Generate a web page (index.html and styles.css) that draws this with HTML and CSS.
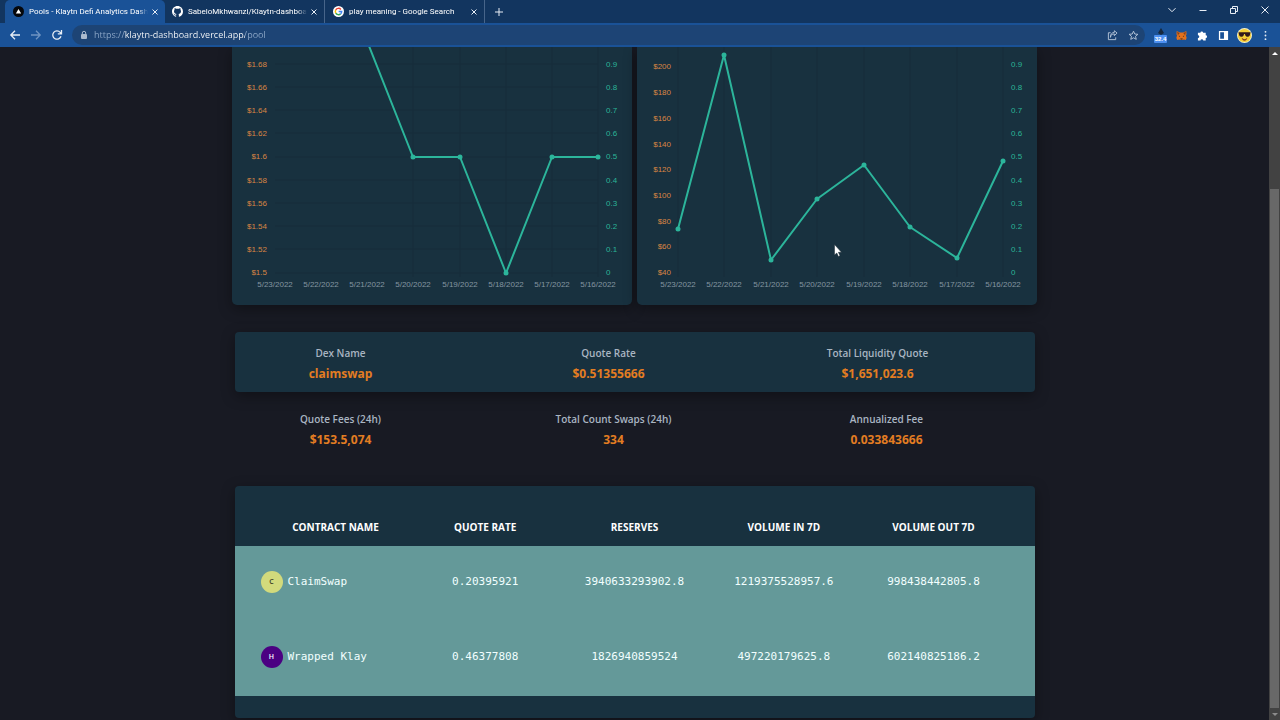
FILE: index.html
```
<!DOCTYPE html>
<html lang="en">
<head>
<meta charset="UTF-8">
<meta name="viewport" content="width=device-width, initial-scale=1.0">
<title>Pools - Klaytn Defi Analytics Dashboard</title>
<link rel="stylesheet" href="styles.css">
</head>
<body>

  <!-- tabs -->
  <header class="tabstrip">
    <div class="tab active">
      <svg class="favicon" viewBox="0 0 12 12"><circle cx="6" cy="6" r="6" fill="#05070b"/><path d="M6 3.2L8.900 8.200H3.100z" fill="#fff"/></svg>
      <span class="tab-title">Pools - Klaytn Defi Analytics Dash</span>
      <button class="tab-close" aria-label="Close tab"><svg viewBox="0 0 8 8"><path d="M1.500 1.500l5 5M6.500 1.500l-5 5"/></svg></button>
    </div>
    <div class="tab">
      <svg class="favicon" viewBox="0 0 16 16"><path fill="#fff" d="M8 0C3.580 0 0 3.580 0 8c0 3.540 2.290 6.530 5.470 7.590.4.070.550-.170.550-.380 0-.190-.010-.820-.010-1.490-2.010.370-2.530-.490-2.690-.940-.090-.230-.480-.940-.820-1.130-.280-.150-.680-.520-.010-.530.630-.010 1.080.580 1.230.820.720 1.210 1.870.870 2.330.660.070-.520.280-.870.510-1.070-1.780-.200-3.640-.890-3.640-3.950 0-.870.310-1.590.820-2.150-.080-.200-.360-1.020.080-2.120 0 0 .670-.210 2.200.820a7.400 7.400 0 0 1 4 0c1.530-1.040 2.200-.820 2.200-.820.440 1.100.160 1.920.080 2.120.510.560.820 1.270.820 2.150 0 3.070-1.870 3.750-3.650 3.950.290.250.540.730.540 1.480 0 1.070-.010 1.930-.010 2.200 0 .210.150.460.550.380A8 8 0 0 0 16 8c0-4.420-3.580-8-8-8z"/></svg>
      <span class="tab-title">SabeloMkhwanzi/Klaytn-dashboa</span>
      <button class="tab-close" aria-label="Close tab"><svg viewBox="0 0 8 8"><path d="M1.500 1.500l5 5M6.500 1.500l-5 5"/></svg></button>
    </div>
    <div class="tab">
      <svg class="favicon" viewBox="0 0 12 12"><circle cx="6" cy="6" r="6" fill="#fff"/><g fill="none" stroke-width="1.600"><path d="M8.600 3.700A3.500 3.500 0 0 0 3 4.300" stroke="#ea4335"/><path d="M3 4.300a3.500 3.500 0 0 0 0 3.400" stroke="#fbbc05"/><path d="M3 7.700a3.500 3.500 0 0 0 5.300.9" stroke="#34a853"/><path d="M8.300 8.600A3.400 3.400 0 0 0 9.500 6.100H6.200" stroke="#4285f4"/></g></svg>
      <span class="tab-title">play meaning - Google Search</span>
      <button class="tab-close" aria-label="Close tab"><svg viewBox="0 0 8 8"><path d="M1.500 1.500l5 5M6.500 1.500l-5 5"/></svg></button>
    </div>
    <button class="new-tab" aria-label="New tab"><svg viewBox="0 0 10 10"><path d="M5 1v8M1 5h8"/></svg></button>
    <div class="window-buttons">
      <button aria-label="Search tabs"><svg viewBox="0 0 10 10"><path d="M1.500 3.200L5 6.700l3.500-3.500"/></svg></button>
      <button aria-label="Minimize"><svg viewBox="0 0 10 10"><path d="M1.500 5.500h7"/></svg></button>
      <button aria-label="Restore"><svg viewBox="0 0 10 10"><path d="M1.500 3.500h5v5h-5zM3.500 3.500v-2h5v5h-2"/></svg></button>
      <button aria-label="Close"><svg viewBox="0 0 10 10"><path d="M1.500 1.500l7 7M8.500 1.500l-7 7"/></svg></button>
    </div>
  </header>

  <!-- toolbar -->
  <nav class="toolbar">
    <button class="nav-btn" aria-label="Back"><svg viewBox="0 0 12 12"><path d="M11 6H2M6 1.800L1.800 6 6 10.200"/></svg></button>
    <button class="nav-btn dim" aria-label="Forward"><svg viewBox="0 0 12 12"><path d="M1 6h9M6 1.800L10.200 6 6 10.200"/></svg></button>
    <button class="nav-btn" aria-label="Reload"><svg viewBox="0 0 12 12"><path d="M10 7.200A4.200 4.200 0 1 1 9.200 3.300L10.200 4.500M10.500 1v3.800H6.800"/></svg></button>
    <div class="omnibox">
      <svg class="lock" viewBox="0 0 8 10"><rect x="1" y="4" width="6" height="5" rx="1" fill="#a9b9cd"/><path d="M2.300 4.300V3a1.700 1.700 0 0 1 3.400 0v1.300" fill="none" stroke="#a9b9cd"/></svg>
      <input class="url" type="text" aria-label="Address" value="https://klaytn-dashboard.vercel.app/pool">
      <button aria-label="Share"><svg viewBox="0 0 12 12"><path d="M4 3H1.500v7.500h8V8M3.800 8C4 5.300 5.500 4.300 8 4.300V6.200l3-2.900-3-2.500v1.800C5 2.800 3.600 5 3.800 8z"/></svg></button>
      <button aria-label="Bookmark"><svg viewBox="0 0 12 12"><path d="M6 1.300l1.400 3.100 3.400.3-2.600 2.200.8 3.300-3-1.700-3 1.700.8-3.300L1.200 4.700l3.400-.3z"/></svg></button>
    </div>
    <div class="extensions">
      <button class="counter" aria-label="Gas tracker"><svg viewBox="0 0 8 7"><path d="M4 0l3 5-3 2-3-2z" fill="#16283e"/></svg><span>32.4</span></button>
      <button aria-label="MetaMask"><svg viewBox="0 0 12 12"><path d="M.8 1l3.400 1.700h3.600L11.200 1l.3 3.500-.7 1.600.8 2.400-.8 2.500-2.300-.6L7.300 11H4.700l-1.200-.6-2.300.6-.8-2.500.8-2.400-.7-1.600z" fill="#e2711d"/><path d="M1.200 1.500l2.800 2-2 2.300zM10.800 1.500L8 3.500l2 2.300z" fill="#87411a"/><path d="M3 6l1.700.8-1.400.5zM9 6l-1.700.8 1.400.5zM4.700 9.200h2.600l-.3 1.200H5z" fill="#2d2524"/></svg></button>
      <button aria-label="Extensions"><svg viewBox="0 0 12 12"><path d="M1 3h2.700a1.500 1.500 0 1 1 3 0H9.500v2.800a1.500 1.500 0 1 1 0 3V11.500H6.800a1.500 1.500 0 0 0-3 0H1V8.800a1.500 1.500 0 0 0 0-3z" fill="#fff"/></svg></button>
      <button aria-label="Side panel"><svg viewBox="0 0 12 12"><path d="M1.700 1.700h8.600v8.600H1.700z" fill="none" stroke="#fff" stroke-width="1.400"/><path d="M6.500 1.500h4v9h-4z" fill="#fff"/></svg></button>
      <button class="profile" aria-label="Profile"><svg viewBox="0 0 16 16"><circle cx="8" cy="8" r="8" fill="#f4eecb"/><circle cx="8" cy="8" r="7" fill="#f5cf36"/><path d="M1.500 4.500h13L13.600 8q-1 1.600-3.200 1.200Q8.800 8.700 8.400 6.500h-.8Q7.200 8.700 5.600 9.200 3.400 9.600 2.400 8z" fill="#32181a"/><path d="M5 10.500q3 3 6 0-.5 3-3 3t-3-3z" fill="#8c3b24"/></svg></button>
      <button aria-label="Menu"><svg viewBox="0 0 12 12"><g fill="#e8eef6"><circle cx="6" cy="2" r="1"/><circle cx="6" cy="6" r="1"/><circle cx="6" cy="10" r="1"/></g></svg></button>
    </div>
  </nav>

  <div class="viewport">
    <main class="page">
      <section class="charts">
        <div class="chart-card">
          <svg viewBox="0 0 400 258" role="img" aria-label="Liquidity chart">
            <path class="grid-lines" d="M43 17h323M43 40h323M43 63h323M43 86h323M43 110h323M43 133h323M43 156h323M43 179h323M43 202h323M43 226h323M181 0v230M228 0v230M274 0v230M320 0v230M366 0v230"/>
            <g class="axis-left">
              <text x="35" y="20">$1.68</text>
              <text x="35" y="43">$1.66</text>
              <text x="35" y="66">$1.64</text>
              <text x="35" y="89">$1.62</text>
              <text x="35" y="112">$1.6</text>
              <text x="35" y="136">$1.58</text>
              <text x="35" y="159">$1.56</text>
              <text x="35" y="182">$1.54</text>
              <text x="35" y="205">$1.52</text>
              <text x="35" y="228">$1.5</text>
            </g>
            <g class="axis-right">
              <text x="374" y="20">0.9</text>
              <text x="374" y="43">0.8</text>
              <text x="374" y="66">0.7</text>
              <text x="374" y="89">0.6</text>
              <text x="374" y="112">0.5</text>
              <text x="374" y="136">0.4</text>
              <text x="374" y="159">0.3</text>
              <text x="374" y="182">0.2</text>
              <text x="374" y="205">0.1</text>
              <text x="374" y="228">0</text>
            </g>
            <g class="axis-bottom">
              <text x="43" y="240">5/23/2022</text>
              <text x="89" y="240">5/22/2022</text>
              <text x="135" y="240">5/21/2022</text>
              <text x="181" y="240">5/20/2022</text>
              <text x="228" y="240">5/19/2022</text>
              <text x="274" y="240">5/18/2022</text>
              <text x="320" y="240">5/17/2022</text>
              <text x="366" y="240">5/16/2022</text>
            </g>
            <polyline class="line" points="135,-6 181,110 228,110 274,226 320,110 366,110"/>
            <g class="dots"><circle cx="181" cy="110" r="2.500"/><circle cx="228" cy="110" r="2.500"/><circle cx="274" cy="226" r="2.500"/><circle cx="320" cy="110" r="2.500"/><circle cx="366" cy="110" r="2.500"/></g>
          </svg>
        </div>
        <div class="chart-card">
          <svg viewBox="0 0 400 258" role="img" aria-label="Volume chart">
            <path class="grid-lines" d="M41 0v230M87 0v230M134 0v230M180 0v230M227 0v230M273 0v230M320 0v230M366 0v230"/>
            <g class="axis-left">
              <text x="34" y="22">$200</text>
              <text x="34" y="48">$180</text>
              <text x="34" y="74">$160</text>
              <text x="34" y="100">$140</text>
              <text x="34" y="125">$120</text>
              <text x="34" y="151">$100</text>
              <text x="34" y="177">$80</text>
              <text x="34" y="202">$60</text>
              <text x="34" y="228">$40</text>
            </g>
            <g class="axis-right">
              <text x="374" y="20">0.9</text>
              <text x="374" y="43">0.8</text>
              <text x="374" y="66">0.7</text>
              <text x="374" y="89">0.6</text>
              <text x="374" y="112">0.5</text>
              <text x="374" y="136">0.4</text>
              <text x="374" y="159">0.3</text>
              <text x="374" y="182">0.2</text>
              <text x="374" y="205">0.1</text>
              <text x="374" y="228">0</text>
            </g>
            <g class="axis-bottom">
              <text x="41" y="240">5/23/2022</text>
              <text x="87" y="240">5/22/2022</text>
              <text x="134" y="240">5/21/2022</text>
              <text x="180" y="240">5/20/2022</text>
              <text x="227" y="240">5/19/2022</text>
              <text x="273" y="240">5/18/2022</text>
              <text x="320" y="240">5/17/2022</text>
              <text x="366" y="240">5/16/2022</text>
            </g>
            <polyline class="line" points="41,182 87,8 134,213 180,152 227,118 273,180 320,211 366,114"/>
            <g class="dots"><circle cx="41" cy="182" r="2.500"/><circle cx="87" cy="8" r="2.500"/><circle cx="134" cy="213" r="2.500"/><circle cx="180" cy="152" r="2.500"/><circle cx="227" cy="118" r="2.500"/><circle cx="273" cy="180" r="2.500"/><circle cx="320" cy="211" r="2.500"/><circle cx="366" cy="114" r="2.500"/></g>
          </svg>
        </div>
      </section>

      <section class="stats filled">
        <div class="stat"><h2>Dex Name</h2><p>claimswap</p></div>
        <div class="stat"><h2>Quote Rate</h2><p>$0.51355666</p></div>
        <div class="stat"><h2>Total Liquidity Quote</h2><p>$1,651,023.6</p></div>
      </section>
      <section class="stats plain">
        <div class="stat"><h2>Quote Fees (24h)</h2><p>$153.5,074</p></div>
        <div class="stat"><h2>Total Count Swaps (24h)</h2><p>334</p></div>
        <div class="stat"><h2>Annualized Fee</h2><p>0.033843666</p></div>
      </section>

      <section class="table-card">
        <table>
          <thead>
            <tr><th>CONTRACT NAME</th><th>QUOTE RATE</th><th>RESERVES</th><th>VOLUME IN 7D</th><th>VOLUME OUT 7D</th></tr>
          </thead>
          <tbody>
            <tr>
              <td><div class="contract"><span class="avatar lime">C</span>ClaimSwap</div></td>
              <td>0.20395921</td><td>3940633293902.8</td><td>1219375528957.6</td><td>998438442805.8</td>
            </tr>
            <tr>
              <td><div class="contract"><span class="avatar purple">H</span>Wrapped Klay</div></td>
              <td>0.46377808</td><td>1826940859524</td><td>497220179625.8</td><td>602140825186.2</td>
            </tr>
          </tbody>
        </table>
      </section>
    </main>
    <div class="scrollbar">
      <span class="arrow up"></span>
      <span class="track"><span class="thumb"></span></span>
      <span class="arrow down"></span>
    </div>
  </div>

  <svg class="cursor" viewBox="0 0 8 13"><path d="M.5.5v10.500l2.300-2 1.600 3.500 1.600-.7-1.600-3.500h3.100z" fill="#fff" stroke="#1b2a35" stroke-width=".5"/></svg>
</body>
</html>
```
FILE: styles.css
```
* {
  box-sizing: border-box;
}
body {
  margin: 0;
  height: 100vh;
  display: flex;
  flex-direction: column;
  overflow: hidden;
  background: #181a23;
  color: #fff;
  font-family: "Open Sans", "Noto Sans", sans-serif;
}
h2, p {
  margin: 0;
}
button {
  display: flex;
  align-items: center;
  justify-content: center;
  padding: 0;
  border: none;
  background: none;
  color: #e8eef6;
  cursor: pointer;
}
svg {
  display: block;
}

/* tabs */
.tabstrip {
  display: flex;
  height: 23px;
  padding-left: 5px;
  background: #12355f;
}
.tab {
  display: flex;
  align-items: center;
  width: 160px;
  padding: 0 4px 0 8px;
  border-right: 1px solid #47658a;
}
.tab.active {
  background: #1a5297;
  border-right: none;
  border-radius: 5px 5px 0 0;
}
.tab.active + .tab {
  padding-left: 7px;
}
.favicon {
  flex: none;
  width: 11px;
  height: 11px;
}
.tab-title {
  flex: 1;
  margin-left: 5px;
  overflow: hidden;
  white-space: nowrap;
  font-family: Roboto, "Open Sans", sans-serif;
  font-size: 8px;
  -webkit-mask-image: linear-gradient(to right, #000 92%, transparent);
  mask-image: linear-gradient(to right, #000 92%, transparent);
}
.tab-close {
  width: 12px;
  height: 12px;
  margin-left: 1px;
}
.tab-close svg {
  width: 8px;
}
.tabstrip button svg {
  fill: none;
  stroke: currentColor;
}
.new-tab {
  width: 28px;
}
.new-tab svg {
  width: 10px;
}
.window-buttons {
  display: flex;
  align-items: flex-start;
  margin-left: auto;
}
.window-buttons button {
  width: 31px;
  height: 19px;
}
.window-buttons svg {
  width: 10px;
}

/* toolbar */
.toolbar {
  display: flex;
  align-items: center;
  height: 24px;
  padding: 0 4px;
  background: #1a5297;
}
.nav-btn {
  width: 21px;
}
.nav-btn svg {
  width: 12px;
  fill: none;
  stroke: currentColor;
  stroke-width: 1.3;
}
.nav-btn.dim {
  color: #6f94c2;
}
.omnibox {
  flex: 1;
  display: flex;
  align-items: center;
  height: 20px;
  margin-left: 5px;
  padding: 0 1px 0 8px;
  border-radius: 10px;
  background: #1d4475;
}
.lock {
  width: 8px;
}
.url {
  flex: 1;
  min-width: 0;
  margin-left: 6px;
  padding: 0;
  border: none;
  outline: none;
  font: 9px "Open Sans", "Noto Sans", sans-serif;
  line-height: 16px;
  /* scheme and path dimmed, host bright */
  background: linear-gradient(to right, #8fa9c9 30px, #fff 30px, #fff 151px, #8fa9c9 151px);
  -webkit-background-clip: text;
  background-clip: text;
  -webkit-text-fill-color: transparent;
}
.omnibox button {
  width: 21px;
}
.omnibox button svg {
  width: 11px;
  fill: none;
  stroke: #b9c8db;
}
.extensions {
  display: flex;
  align-items: center;
  margin-left: 5px;
}
.extensions button {
  width: 21px;
  height: 20px;
}
.extensions svg {
  width: 11px;
}
.extensions .counter {
  flex-direction: column;
}
.extensions .counter svg {
  width: 8px;
}
.counter span {
  padding: 0 1px;
  border-radius: 1px;
  background: #4c8ff0;
  color: #fff;
  font: bold 6px/8px "Liberation Sans", Arial, sans-serif;
}
.extensions .profile svg {
  width: 15px;
}

/* page */
.viewport {
  flex: 1;
  display: flex;
  min-height: 0;
}
.page {
  flex: 1;
  min-width: 0;
  overflow: hidden;
}
.charts {
  display: flex;
  gap: 5px;
  max-width: 805px;
  margin: 0 auto 27px;
}
.chart-card {
  flex: 1;
  background: #18313f;
  border-radius: 0 0 5px 5px;
  box-shadow: 0 4px 14px rgba(0, 0, 0, .35);
}
.chart-card svg {
  width: 100%;
  font-family: "Liberation Sans", Arial, sans-serif;
  font-size: 8px;
}
.grid-lines {
  stroke: #162d3a;
}
.axis-left {
  fill: #d98544;
  text-anchor: end;
}
.axis-right {
  fill: #2bb598;
}
.axis-bottom {
  fill: #8495a0;
  text-anchor: middle;
}
.line {
  fill: none;
  stroke: #2cb59b;
  stroke-width: 2;
  stroke-linejoin: round;
}
.dots {
  fill: #2cb59b;
}

.stats {
  display: grid;
  grid-template-columns: 212fr 324fr 214fr 50fr;
  max-width: 800px;
  margin: 0 auto;
  padding: 12px 0 6px;
  text-align: center;
}
.stats.filled {
  background: #18313f;
  border-radius: 4px;
  box-shadow: 0 4px 14px rgba(0, 0, 0, .35);
}
.stats.plain {
  grid-template-columns: 212fr 334fr 212fr 42fr;
  margin-top: 6px;
  margin-bottom: 28px;
}
.stat h2 {
  color: #a9b5c2;
  font-size: 10px;
  font-weight: 600;
  line-height: 18px;
}
.stat p {
  color: #e37d22;
  font-size: 12px;
  font-weight: 700;
  line-height: 24px;
}

.table-card {
  max-width: 800px;
  margin: 0 auto;
  padding-bottom: 22px;
  background: #18313f;
  border-radius: 4px;
  box-shadow: 0 4px 14px rgba(0, 0, 0, .35);
}
table {
  width: 100%;
  table-layout: fixed;
  border-collapse: collapse;
}
th, td {
  padding: 0;
  text-align: center;
}
th {
  height: 60px;
  padding-top: 22px;
  font-size: 10px;
  font-weight: 700;
}
th:first-child, th:last-child {
  width: 22%;
}
th:first-child, td:first-child {
  padding-left: 26px;
}
th:last-child, td:last-child {
  padding-right: 26px;
}
tbody {
  background: #649999;
}
td {
  height: 75px;
  padding-bottom: 4px;
  color: #f2ffff;
  font: 11px "DejaVu Sans Mono", monospace;
}
.contract {
  display: flex;
  align-items: center;
  gap: 5px;
}
.avatar {
  width: 22px;
  height: 22px;
  border-radius: 50%;
  font: 600 7px/22px "Open Sans", sans-serif;
  text-align: center;
}
.avatar.lime {
  background: #d2da7c;
  color: #33361c;
}
.avatar.purple {
  background: #4b0082;
  color: #fff;
}

/* scrollbar */
.scrollbar {
  display: flex;
  flex-direction: column;
  width: 11px;
  background: #424242;
}
.arrow {
  height: 12px;
  display: flex;
  align-items: center;
  justify-content: center;
}
.arrow::before {
  content: "";
  border: 3px solid transparent;
}
.arrow.up::before {
  border-top: none;
  border-bottom-color: #fff;
}
.arrow.down::before {
  border-bottom: none;
  border-top-color: #8c8c8c;
}
.track {
  flex: 1;
  display: flex;
  align-items: flex-end;
  justify-content: center;
}
.thumb {
  width: 9px;
  height: 80%;
  background: #686868;
}

.cursor {
  position: absolute;
  left: 834px;
  top: 244px;
  width: 8px;
}
```
